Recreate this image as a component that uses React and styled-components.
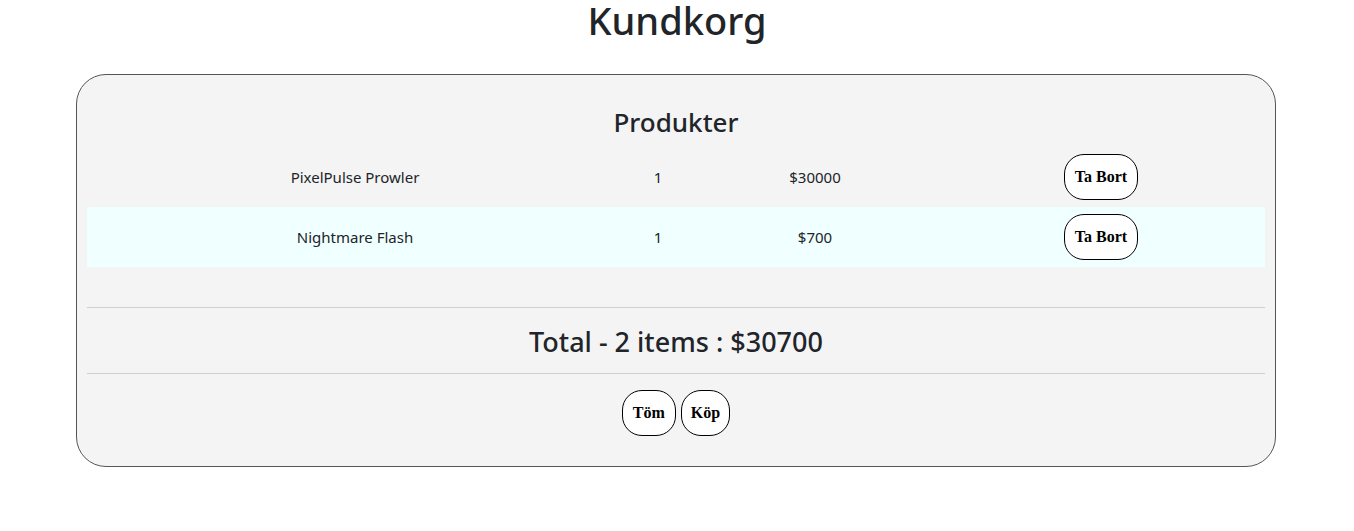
import React from 'react';
import styled, { createGlobalStyle } from 'styled-components';

const GlobalStyle = createGlobalStyle`
  body {
    margin: 0;
    background: #fff;
    color: #212529;
    font-family: "Noto Sans", "Open Sans", sans-serif;
  }
`;

const Page = styled.div`
  display: flex;
  flex-direction: column;
  align-items: center;
`;

const Title = styled.h1`
  margin: 0 0 34px;
  font-size: 38px;
  font-weight: 500;
  line-height: 40px;
  color: #212529;
`;

const Card = styled.div`
  box-sizing: border-box;
  width: 1200px;
  margin-right: 2px;
  padding: 10px 10px 30px;
  background: #f4f4f4;
  border: 1px solid #555;
  border-radius: 30px;
  display: flex;
  flex-direction: column;
  align-items: center;
`;

const Heading = styled.h3`
  margin: 20px 0 8px;
  font-size: 26px;
  font-weight: 500;
  line-height: 34px;
`;

const List = styled.div`
  align-self: stretch;
  display: flex;
  flex-direction: column;
`;

const Row = styled.div`
  display: grid;
  grid-template-columns: 536px 70px 244px 1fr;
  align-items: center;
  height: 60px;
  background: ${(p) => (p.$odd ? '#f0ffff' : 'transparent')};
  font-size: 15px;
`;

const Cell = styled.div`
  text-align: center;
`;

const Button = styled.button`
  box-sizing: border-box;
  height: 46px;
  padding: 0 ${(p) => p.$pad || 10}px;
  background: #fff;
  border: 1px solid #000;
  border-radius: 20px;
  font-family: "Liberation Serif", serif;
  font-weight: bold;
  font-size: 16px;
  color: #000;
`;

const Divider = styled.hr`
  align-self: stretch;
  margin: ${(p) => p.$top}px 0 0;
  border: 0;
  border-top: 1px solid #cfcfcf;
`;

const Total = styled.h3`
  margin: 17px 0 14px;
  font-size: 27px;
  font-weight: 500;
  line-height: 34px;
`;

const Actions = styled.div`
  display: flex;
  gap: 5px;
  margin-top: 16px;
`;

const items = [
  { name: 'PixelPulse Prowler', qty: 1, price: 30000 },
  { name: 'Nightmare Flash', qty: 1, price: 700 },
];

export default function App() {
  const total = items.reduce((s, i) => s + i.price * i.qty, 0);
  return (
    <Page>
      <GlobalStyle />
      <Title>Kundkorg</Title>
      <Card>
        <Heading>Produkter</Heading>
        <List>
          {items.map((item, i) => (
            <Row key={item.name} $odd={i % 2 === 1}>
              <Cell>{item.name}</Cell>
              <Cell>{item.qty}</Cell>
              <Cell>${item.price}</Cell>
              <Cell>
                <Button>Ta Bort</Button>
              </Cell>
            </Row>
          ))}
        </List>
        <Divider $top={40} />
        <Total>
          Total - {items.length} items : ${total}
        </Total>
        <Divider $top={0} />
        <Actions>
          <Button $pad={10}>Töm</Button>
          <Button $pad={9}>Köp</Button>
        </Actions>
      </Card>
    </Page>
  );
}
